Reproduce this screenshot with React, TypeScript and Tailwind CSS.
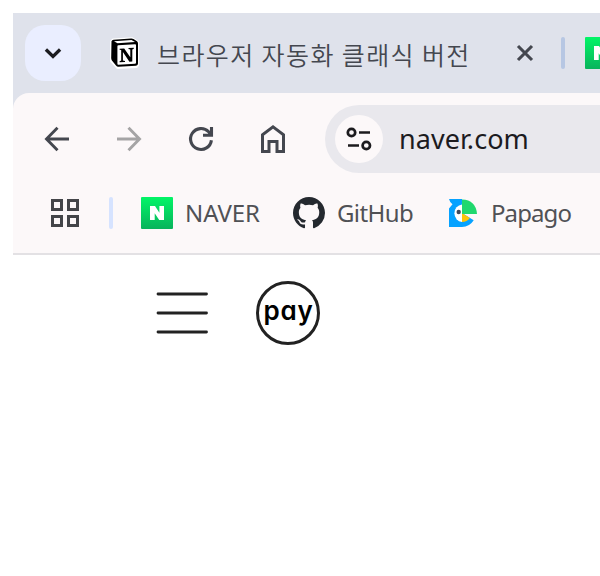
import { ReactNode } from "react";

const latin = "font-['Noto_Sans','Open_Sans',sans-serif]";

function NaverIcon({ id }: { id: string }) {
  return (
    <svg width="32" height="32" viewBox="0 0 32 32" className="shrink-0">
      <defs>
        <linearGradient id={id} x1="0" y1="0" x2="0" y2="1">
          <stop offset="0" stopColor="#02f567" />
          <stop offset="1" stopColor="#08b35c" />
        </linearGradient>
      </defs>
      <rect width="32" height="32" rx="1" fill={`url(#${id})`} />
      <path d="M9 9h5l4.400 6.700V9H23v14h-4.800L13.700 16.300V23H9z" fill="#fff" />
    </svg>
  );
}

function NotionIcon() {
  return (
    <svg width="30" height="32" viewBox="0 0 30 32" className="shrink-0">
      <path d="M1 4.500L3 2.500L22 1.200L28.200 5V28L26.500 30L7.500 31L1 24z" fill="#fff" stroke="#fff" strokeWidth="2" strokeLinejoin="round" />
      <path d="M1.500 4.200Q2 2.800 3.500 2.700L21 1.500Q22.500 1.400 23.500 2L27 4.300Q28 5 28 6.500V26.500Q28 28.500 26 28.700L8.500 29.800Q7 29.900 6 28.600L1.900 23.400Q1.200 22.500 1.200 21z" fill="#000" />
      <path d="M4 4.200L21.500 3L25 5.100L7.500 6.200z M7.400 9.300Q7.400 8.300 8.300 8.200L25 7.200Q26 7.100 26 8.200V25.700Q26 26.700 25 26.800L8.300 27.700Q7.400 27.800 7.400 26.700z" fill="#fff" />
      <path d="M9.600 11.700L14.200 11.400L20.300 20.300V12.500L18.500 12.100V11.100L23.800 10.800V11.800L22.300 12.500V24.500L19.400 24.700L12.900 15V23.400L15 23.900V24.900L9.600 25.200V24.200L11.200 23.500V13L9.600 12.700z" fill="#000" />
    </svg>
  );
}

function GitHubIcon() {
  return (
    <svg width="32" height="32" viewBox="0 0 16 16" className="shrink-0">
      <path fill="#24292f" d="M8 0C3.580 0 0 3.580 0 8c0 3.540 2.290 6.530 5.470 7.590.4.070.550-.170.550-.380 0-.190-.010-.820-.010-1.490-2.010.370-2.530-.490-2.690-.940-.090-.230-.480-.940-.820-1.130-.280-.150-.680-.520-.010-.530.630-.010 1.080.580 1.230.820.720 1.210 1.870.870 2.330.660.070-.520.280-.870.510-1.070-1.780-.2-3.640-.890-3.640-3.950 0-.870.310-1.590.820-2.150-.080-.2-.360-1.020.080-2.120 0 0 .670-.210 2.200.820.640-.180 1.320-.270 2-.270s1.360.090 2 .270c1.530-1.040 2.200-.820 2.200-.820.440 1.100.160 1.920.080 2.120.510.560.820 1.270.820 2.150 0 3.070-1.870 3.750-3.650 3.950.290.250.540.730.540 1.480 0 1.070-.010 1.930-.010 2.200 0 .210.150.460.550.380A8.010 8.010 0 0016 8c0-4.420-3.580-8-8-8z" />
    </svg>
  );
}

function PapagoIcon() {
  return (
    <svg width="28" height="28" viewBox="0 0 28 28" className="shrink-0">
      <path d="M0 0H13V14L24.700 21.300Q20.500 28 13 28H0V9.500L3.500 5.200Q1 4 0 0z" fill="#06a2ff" />
      <path d="M13 5.500A8.500 8.800 0 0 0 13 23z" fill="#fff" />
      <path d="M13 14L20.900 19Q18 23 13 23z" fill="#fdc40a" />
      <path d="M13 0.500Q27 1 28 15H13z" fill="#20d86e" />
      <circle cx="9.700" cy="13" r="2.200" fill="#41495b" />
    </svg>
  );
}

function Icon({ children, w = 32, className = "" }: { children: ReactNode; w?: number; className?: string }) {
  return (
    <svg width={w} height="32" viewBox={`0 0 ${w} 32`} fill="none" stroke="currentColor" className={`shrink-0 ${className}`}>
      {children}
    </svg>
  );
}

function Bookmark({ icon, label, className }: { icon: ReactNode; label: string; className: string }) {
  return (
    <div className="flex shrink-0 items-center">
      {icon}
      <span className={`-mt-px whitespace-nowrap leading-8 text-[#505155] ${latin} ${className}`}>{label}</span>
    </div>
  );
}

export default function App() {
  return (
    <div className="h-[576px] w-[600px] overflow-hidden bg-white pt-[13px] pl-[13px]">
      <div className="bg-[#dfe2eb]">
        <div className="flex h-20 items-center overflow-hidden pl-3">
          <button className="flex size-14 shrink-0 items-center justify-center rounded-[20px] bg-[#eaeeff] text-[#1c1c20]">
            <Icon>
              <path d="M8.900 12.500L16 19.500L23.100 12.500" strokeWidth="3.300" />
            </Icon>
          </button>
          <div className="ml-[29px] flex">
            <NotionIcon />
          </div>
          <span className="mt-0.5 ml-[17px] w-[316px] shrink-0 whitespace-nowrap font-['Noto_Sans_CJK_KR',sans-serif] text-[25px] leading-8 font-[350] tracking-[1.4px] text-[#44474f]">
            브라우저 자동화 클래식 버전
          </span>
          <Icon className="ml-[36px] text-[#44474f]">
            <path d="M9 9L23 23M23 9L9 23" strokeWidth="3.100" />
          </Icon>
          <div className="ml-5 h-8 w-1 shrink-0 rounded-sm bg-[#b7c7e3]" />
          <div className="ml-5 flex">
            <NaverIcon id="tab-naver" />
          </div>
        </div>

        <div className="h-[162px] rounded-tl-2xl border-b-2 border-[#e3e1e4] bg-[#fcf8f9]">
          <div className="flex h-[92px] items-center gap-10 pl-7">
            <Icon className="text-[#44474f]">
              <path d="M28 16H6M16.500 4.800L5.500 16L16.500 27.200" strokeWidth="2.900" />
            </Icon>
            <Icon className="text-[#a5a4a5]">
              <path d="M4 16H26M15.500 4.800L26.500 16L15.500 27.200" strokeWidth="2.900" />
            </Icon>
            <Icon className="text-[#44474f]">
              <path d="M26.400 17.200A10.450 10.450 0 1 1 23.600 8.800L26 11.500M26.500 4V12.300H18" strokeWidth="3.100" />
            </Icon>
            <Icon className="text-[#44474f]">
              <path d="M5.500 28.500V11.700L16 3.900L26.500 11.700V28.500H20V18.500H12V28.500Z" strokeWidth="3" />
            </Icon>
            <div className="-ml-1 flex h-[68px] min-w-0 flex-1 items-center rounded-l-full bg-[#e9e8ed] pl-2.5">
              <div className="flex size-12 shrink-0 items-center justify-center rounded-full bg-[#fcf8f9] text-[#1c1b1e]">
                <Icon>
                  <circle cx="8.500" cy="9.500" r="3.700" strokeWidth="2.700" />
                  <path d="M16 9.500H27M5 22.500H16" strokeWidth="2.700" />
                  <circle cx="23.300" cy="22.500" r="3.700" strokeWidth="2.700" />
                </Icon>
              </div>
              <span className={`ml-[16px] text-[27px] leading-9 tracking-[0.05px] text-[#1c1b1f] ${latin}`}>naver.com</span>
            </div>
          </div>

          <div className="flex h-14 items-center pl-9">
            <Icon className="text-[#444549]">
              <path d="M3.500 3.500h9v9h-9zM19.500 3.500h9v9h-9zM3.500 19.500h9v9h-9zM19.500 19.500h9v9h-9z" strokeWidth="3" />
            </Icon>
            <div className="ml-7 h-8 w-1 shrink-0 rounded-sm bg-[#d6e3ff]" />
            <div className="ml-7 w-[152px] shrink-0">
              <Bookmark icon={<NaverIcon id="bookmark-naver" />} label="NAVER" className="ml-[12px] text-[24px] tracking-[-0.1px]" />
            </div>
            <div className="w-[156px] shrink-0">
              <Bookmark icon={<GitHubIcon />} label="GitHub" className="ml-[12px] text-[24px] tracking-[-0.6px]" />
            </div>
            <Bookmark icon={<PapagoIcon />} label="Papago" className="ml-[14px] text-[24px] tracking-[-0.9px]" />
          </div>
        </div>
      </div>

      <div className="flex items-center pt-[26px] pl-[143px]">
        <svg width="53" height="44" viewBox="0 0 53 44" fill="none" stroke="#222" strokeWidth="2.800" strokeLinecap="round">
          <path d="M2 3H50.500M2 22H50.500M2 41H50.500" />
        </svg>
        <div className="ml-[47px] flex size-16 justify-center rounded-full border-[3px] border-[#222]">
          <span className="pt-[11px] pl-px font-['Inter',sans-serif] text-[26px] leading-8 font-semibold tracking-[0.8px] text-black [font-feature-settings:'cv11']">pay</span>
        </div>
      </div>
    </div>
  );
}
